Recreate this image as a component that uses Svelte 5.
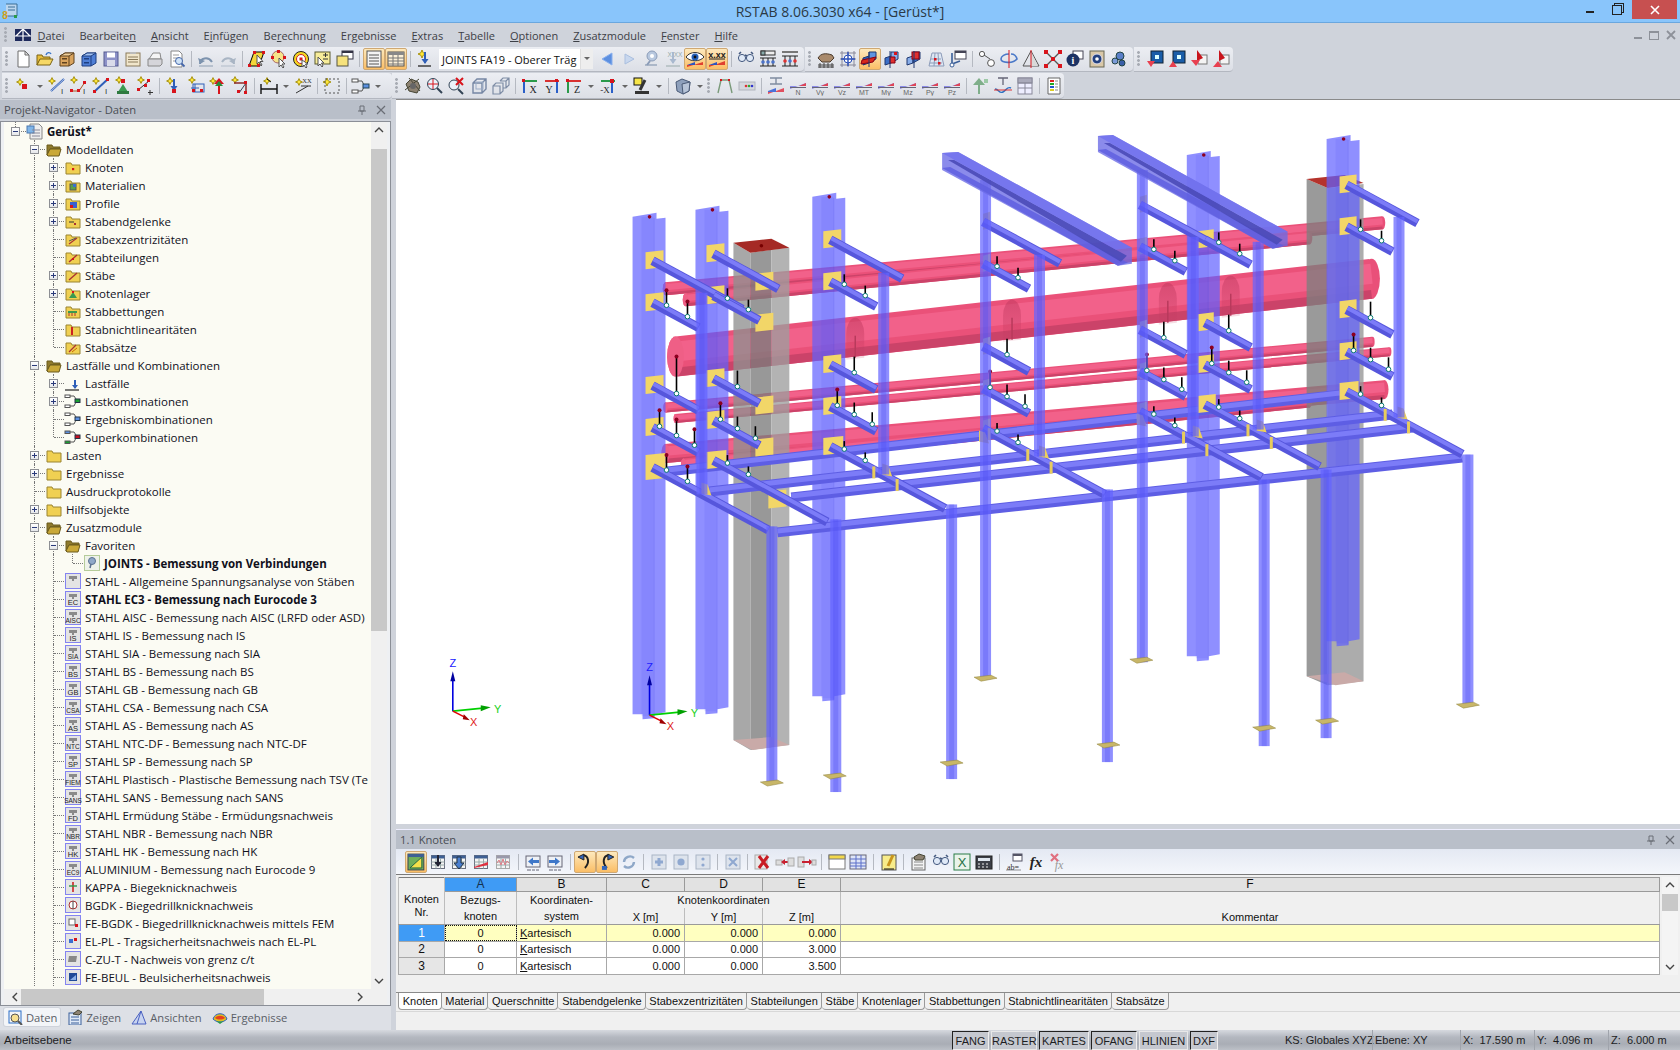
<script>
  // tiny svg string helpers for the toolbar and tree icons
  const R = (x, y, w, h, f, s = 'none') => `<rect x="${x}" y="${y}" width="${w}" height="${h}" fill="${f}" stroke="${s}"/>`
  const L = (d, c = '#555', w = 1) => `<path d="${d}" fill="none" stroke="${c}" stroke-width="${w}"/>`
  const P = (d, f, s = 'none') => `<path d="${d}" fill="${f}" stroke="${s}"/>`
  const C = (x, y, r, f, s = 'none') => `<circle cx="${x}" cy="${y}" r="${r}" fill="${f}" stroke="${s}"/>`
  const T = (x, y, t, z = 8, f = '#333', fam = 'Liberation Sans') => `<text x="${x}" y="${y}" font-size="${z}" fill="${f}" font-family="${fam}" text-anchor="middle">${t}</text>`
  const star = (x, y, r = 3.4) => P(`M${x} ${y - r}l${r * .3} ${r * .7} ${r * .7} ${r * .3} -${r * .7} ${r * .3} -${r * .3} ${r * .7} -${r * .3} -${r * .7} -${r * .7} -${r * .3} ${r * .7} -${r * .3}z`, '#ffe838', '#a89210')
  const sq = (x, y, s = 3.4, c = '#d8141c') => R(x, y, s, s, c)
  const folderOpen = (a = '#e6bd3c', b = '#f6d866') => P('M2 16V6h5l1 2h7v3H5z', a, '#7a6314') + P('M2 16l3-6h13l-3 6z', b, '#7a6314')
  const cab = (a, b, c) => P('M3 7l5-3h9v10l-5 3H3z', a, c) + P('M3 7l5-3h9l-5 3z', b, c) + L('M12 7v10', c) + R(5, 9, 5, 1.5, c) + R(5, 13, 5, 1.5, c)
  const frame = (x = 3, y = 3, w = 14, h = 13, c = '#e3d9b8', e = '#7b6f50') => R(x, y, w, h, c, e)
  const table = (c = '#6a7080', h = '#3d5f94') => R(3.5, 3.5, 13, 13, '#f5f5f5', c) + R(3.5, 3.5, 13, 3, h) + L('M3.5 10h13M3.5 13h13M8 6.5v10M12.5 6.5v10', '#9aa')
  const ldown = (c = '#2f5fb8') => L('M10 3v11', c, 2) + P('M6.5 10l3.5 5 3.5-5z', c)
  const arrowsBar = (dir) => R(3, 4, 14, 11, '#eef1f6', '#667') + (dir < 0 ? P('M5 9.5l5-4v2.5h6v3h-6v2.5z', '#3e77c9') : P('M15 9.5l-5-4v2.5H4v3h6v2.5z', '#3e77c9')) + L('M4 18h4M9 18h3M13 18h3', '#667')
  const planes = (a, b) => P('M3 9l6-2v7l-6 2z', a, '#203870') + P('M9 3h7v7l-7 4z', b, '#203870')
  const beam = (t, lbl) => P('M2 13l16-6v3H2z', '#8a8ae8') + P('M11 10l7-3v3z', '#e04455') + R(2, 11, 16, 1, '#667') + T(10, 18.5, lbl, 7, '#666')

  const ic = {
    new: P('M5 2h7l4 4v12H5z', '#fff', '#6c6c6c') + P('M12 2v4h4z', '#ddd', '#6c6c6c'),
    open: folderOpen() + L('M11 6c1-3 4-3 5-1', '#3874c8', 1.4),
    cab: cab('#d9a45f', '#f0cf9a', '#5e4220'),
    cabB: cab('#4f7fd6', '#a4c3f2', '#1e3f80'),
    save: R(3, 3, 14, 14, '#8d92c8', '#555a90') + R(6, 3.5, 8, 5, '#fff') + R(6, 11, 8, 6, '#d9dbea'),
    notes: frame(3, 4, 14, 13, '#f1e6cb', '#8a7a5a') + L('M5 8h10M5 10.5h10M5 13h10', '#8a7a5a') + R(7, 3, 6, 2, '#bbb'),
    print: P('M4 10l4-6h7l1 6z', '#f5f5f5', '#888') + P('M3 10h14v5l-2 2H3z', '#d5d5da', '#888'),
    prev: P('M4 2h8l3 3v13H4z', '#fff', '#888') + L('M6 6h6M6 9h6M6 12h3', '#999') + C(12, 12, 3.5, '#cfe3f7', '#46a') + L('M14.5 14.5l3 3', '#46a', 1.8),
    undo: L('M4 15c0-6 8-8 12-2', '#7d93ae', 2) + P('M2 9l2 6 5-3z', '#7d93ae') + L('M3 17h14', '#9aa9bb', 1.2),
    redo: L('M16 15c0-6-8-8-12-2', '#a9b5c4', 2) + P('M18 9l-2 6-5-3z', '#a9b5c4') + L('M3 17h14', '#b9c3cf', 1.2),
    para: P('M7 3h10l-5 14H2z', '#f4d63a', '#000') + sq(1, 15, 3) + sq(6, 2, 3) + sq(15, 2, 3) + sq(10, 15, 3) + P('M10 6v9l2-2 2 4 1-1-2-3.5h3z', '#fff', '#555'),
    wheel: C(9, 8, 6, '#f6e48a', '#a66') + sq(2, 7, 3) + sq(14, 7, 3) + sq(8, 1, 3) + P('M10 9v9l2-2 2 3 1-1-2-3h3z', '#fff', '#555'),
    wheelY: C(10, 10, 7.5, '#f6d820', '#222') + C(10, 10, 4.5, '#fff', '#c22') + sq(8.5, 8.5, 3) + P('M11 11v7l2-2 2 3 1-1-1.5-3h2.5z', '#fff', '#555'),
    curAdd: frame(2, 3, 15, 12, '#f7ec9a', '#5a5a30') + L('M10 6h5M12.5 4v4M10 10h5', '#333') + P('M5 8v9l2-2 2 3 1-1-1.5-3H11z', '#fff', '#555'),
    winY: R(7, 2, 11, 8, '#fff', '#334') + R(7, 2, 11, 2, '#334') + R(2, 7, 11, 10, '#f6e27c', '#554'),
    list: frame(3, 2, 14, 16, '#f3f3f3', '#555') + L('M5 6h10M5 9h10M5 12h10M5 15h10', '#555'),
    table: R(2, 3, 16, 14, '#fbf0d8', '#555') + R(2, 3, 16, 3, '#888') + L('M2 9h16M2 12h16M2 15h16M7 6v11M12 6v11', '#777'),
    load: star(7, 5, 4) + L('M3 17h13', '#333', 1.4) + ldown(),
    left: P('M15 4v12L5 10z', '#5c8fe0', '#8ab0ee'),
    right: P('M6 5v10l9-5z', '#c8d7ee', '#aabfdf'),
    pin: L('M4 16h12', '#9aa8bd', 1.5) + C(11, 7, 5, '#b8c8df', '#8b9cb8') + C(11, 7, 2, '#fff') + L('M9 12l-3 4', '#8b9cb8', 2),
    xxa: T(12, 8, 'X.XX', 6.5, '#9aa') + ldown('#a9b9cf') + L('M3 17h14', '#9aa'),
    eye: P('M1 8c4-6 14-6 18 0-4 5-14 5-18 0z', '#fff', '#333') + C(10, 8, 3.5, '#2560b8') + C(10, 8, 1.4, '#111') + P('M2 18l16-5v3H2z', '#e04030') + P('M2 16l8-3v3z', '#2f55c0'),
    xx: `<text x="10" y="9" font-size="9" font-weight="bold" font-family="Liberation Sans" text-anchor="middle" fill="#222">x.xx</text>` + P('M2 18l16-6v4H2z', '#e04030') + P('M2 16l8-3v3z', '#2f55c0') + L('M2 10h16', '#222'),
    glasses: C(6, 9, 3.6, '#dfe9f7', '#44597f') + C(14, 9, 3.6, '#dfe9f7', '#44597f') + L('M9 6l2 1M3 5l2-2M15 3l2 2', '#44597f', 1.6),
    bars: R(3, 2, 14, 4, '#eee', '#333') + R(3, 2, 4, 4, '#8aa', '#333') + L('M2 9h16M2 17h16M5 9v8M10 9v8M15 9v8', '#222') + C(5, 13, 1.8, '#4a72c8') + C(10, 13, 1.8, '#4a72c8') + C(15, 13, 1.8, '#4a72c8'),
    bars2: L('M2 7h16M2 17h16M5 7v10M10 7v10M15 7v10', '#222') + C(5, 12, 1.8, '#d33') + C(10, 12, 1.8, '#4a72c8') + C(15, 12, 1.8, '#d33') + R(2, 2, 16, 2, '#777'),
    hand: P('M2 9c3-5 8-5 14-3l2 3-4 4H6z', '#a98a6c', '#4a3a2c') + L('M2 16h16M2 18h16', '#444', 1) + L('M4 14v5M8 14v5M12 14v5M16 14v5', '#444', 1),
    gridB: L('M2 4h16M2 10h16M2 16h16M4 2v16M10 2v16M16 2v16', '#889') + C(10, 10, 4, '#fff', '#2b4fb8') + L('M10 3v14M3 10h14', '#2b4fb8', 1.4),
    planeA: planes('#2a5fb8', '#5f94e0') + P('M2 11l14-3-3 5-12 2z', '#d8281c', '#801') + L('M9 3v15', '#203870'),
    planeB: planes('#3a6fc8', '#88aeea') + P('M8 8h5v6H8z', '#e03030', '#801') + sq(12, 3, 3) + L('M8 2v17', '#203870'),
    planeC: planes('#88aeea', '#3a6fc8') + R(8, 3, 7, 7, '#e03030', '#801') + L('M10 2v17', '#203870'),
    gridR: P('M3 17l3-13h9l3 13z', '#dfe7f4', '#8b9bb8') + L('M5 10h10M4 14h12M9 4l-1 13M12 4l1 13', '#8b9bb8') + sq(8, 9, 2.5) + sq(12, 13, 2.5),
    curW: L('M4 15V4', '#3a5f99', 1.6) + R(7, 2, 11, 8, '#fff', '#445') + R(7, 2, 11, 2, '#445') + L('M4 15l8-3', '#3a5f99', 1.6) + C(4, 16, 2, '#fff', '#3a5f99'),
    chain: C(5, 5, 2.6, '#fff', '#555') + C(14, 14, 3.4, '#fff', '#555') + L('M7 6l6 4', '#555'),
    rot: L('M2 10c0 4 12 5 16 0-1-4-3-5-6-5', '#4a78c8', 1.6) + L('M2 10c0-3 4-5 8-5', '#4a78c8', 1.6) + L('M10 1v18', '#d8141c'),
    tri: L('M10 2L2 17h8M10 2l8 15h-8', '#555') + P('M10 3l7 14h-7z', '#d9d9d9') + L('M10 1v18', '#d8141c'),
    xr: L('M3 3l14 14M17 3L3 17', '#555', 1.4) + sq(1, 1, 4) + sq(15, 1, 4) + sq(1, 15, 4) + sq(15, 15, 4) + sq(8, 8, 4),
    info: R(8, 2, 10, 8, '#fff', '#445') + C(8, 11, 6.5, '#1c3264') + `<text x="8" y="15" font-size="10" font-weight="bold" fill="#fff" font-family="Liberation Serif" text-anchor="middle">i</text>`,
    gear: frame(3, 2, 14, 16, '#d9c8a8', '#665') + C(10, 10, 5, '#23407e', '#dde') + C(10, 10, 1.8, '#fff'),
    gear2: C(11, 7, 4, '#5a7fc8', '#244') + C(6, 12, 3, '#7a9ad8', '#244') + C(13, 14, 3, '#3a5fa8', '#244'),
    blueD: R(6, 2, 12, 12, '#1a5da8', '#123') + R(10, 6, 4, 4, '#dff') + P('M2 12h8l-4 6z', '#e84050'),
    blueU: R(6, 2, 12, 12, '#1a5da8', '#123') + R(10, 6, 4, 4, '#dff') + P('M2 18h8l-4-6z', '#e84050'),
    redD: R(9, 6, 9, 9, '#f4f4f4', '#777') + P('M8 1l6 8-6 3z', '#c8141c') + P('M2 11h9l-4 6z', '#e84050'),
    redU: R(9, 6, 9, 9, '#f4f4f4', '#777') + P('M8 1l6 8-6 3z', '#c8141c') + P('M2 18h9l-4-6z', '#e84050'),
    s1: star(7, 6) + sq(9, 8, 5),
    s2: star(5, 5) + L('M4 15L17 3', '#2f5fb8', 2) + L('M4 15L17 3', '#fff', .6) + T(15, 18, 'I', 8, '#333'),
    s3: star(5, 4) + L('M2 15h8l6-9', '#a52', 1) + sq(1, 13, 3) + sq(8, 13, 3) + sq(14, 5, 3) + T(15, 18, 'I', 8),
    s4: star(5, 5) + L('M4 15L17 3', '#2f5fb8', 2) + sq(2, 14, 3) + sq(15, 2, 3) + T(15, 18, 'I', 8),
    s5: star(6, 4) + sq(8, 3, 4) + P('M10 8l5 8H5z', '#3a9a50') + R(4, 15, 12, 3, '#2f7a40'),
    s6: star(6, 4) + L('M3 14L14 5', '#333') + sq(2, 12, 3) + sq(12, 3, 3) + sq(9, 8, 3) + L('M15 14v5M13 16.5h5', '#333'),
    s7: star(6, 5) + ldown('#2f5fb8') + sq(8, 13, 4),
    s8: star(6, 4) + R(7, 8, 11, 8, 'none', '#2f5fb8') + L('M5 12h8M9 8v8', '#2f5fb8') + sq(6, 13, 3) + sq(14, 13, 3),
    s9: star(5, 5) + P('M11 2l5 6h-10z', '#d8141c') + P('M11 5l4 5H7z', '#2a8a3a') + L('M11 10v8', '#d8141c', 2),
    s10: star(5, 4) + L('M4 7h12v10', '#8a2a2a', 1.5) + L('M16 7L9 17', '#345') + sq(14, 5, 3) + sq(7, 14, 3) + sq(14, 15, 3),
    dim: L('M2 8v10M18 8v10M2 13h16', '#111', 1.4) + star(8, 5) + L('M8 3l4 3', '#111'),
    dimx: star(6, 6) + T(14, 7, 'XX', 6.5, '#333', 'Liberation Serif') + L('M3 17L15 10', '#333') + L('M8 10h10', '#333'),
    dots: star(5, 6, 4) + `<rect x="3" y="3" width="14" height="14" fill="none" stroke="#555" stroke-dasharray="2 2"/>`,
    combi: R(1, 3, 6, 3, '#fff', '#555') + R(1, 14, 6, 3, '#fff', '#555') + L('M7 5h4l2 4M7 15h4l2-4', '#555') + R(12, 8, 6, 4, '#5c90e0', '#245'),
    cam: P('M3 8l5-5 7 3 2 5-3 6-8-2z', '#8d8272', '#443') + L('M2 14L16 3M6 2l11 13', '#443') + C(10, 10, 3, '#666'),
    zoomC: C(8, 8, 5.5, '#eaf2fb', '#345') + L('M12 12l5 5', '#345', 2) + L('M8 3v10M3 8h10', '#d8141c'),
    zoomX: C(7, 9, 5, '#eaf2fb', '#345') + L('M11 13l5 5', '#345', 2) + L('M9 2l7 7M16 2l-7 7', '#d8141c', 2),
    cube: L('M4 7l4-4h9v10l-4 4H4zM4 7h9v10M13 7l4-4', '#7687a4', 1.4) + R(7, 6, 7, 7, 'none', '#9aabc6'),
    cubes: L('M2 10l3-3h7v8l-3 3H2zM2 10h7v8', '#7e8da6', 1.2) + L('M9 5l3-3h6v7l-3 3h-3M9 5h6v7M15 5l3-3', '#7e8da6', 1.2),
    axX: L('M3 5h14', '#2a9a4a', 2) + L('M4 4v13', '#2a5fc8', 2) + T(13, 17, 'X', 10, '#222', 'Liberation Serif') + sq(2, 3, 3),
    axY: L('M3 5h14', '#d83030', 2) + L('M15 4v13', '#2a5fc8', 2) + T(7, 17, 'Y', 10, '#222', 'Liberation Serif') + sq(13, 3, 3),
    axZ: L('M3 5h14', '#d83030', 2) + L('M4 4v13', '#2a9a4a', 2) + T(13, 17, 'Z', 10, '#222', 'Liberation Serif') + sq(2, 3, 3),
    axm: L('M3 5h14', '#2a9a4a', 2) + L('M14 4v13', '#2a5fc8', 2) + T(7, 17, '-X', 9, '#222', 'Liberation Serif') + sq(12, 3, 4),
    micro: R(2, 2, 8, 7, '#f7e548', '#111') + L('M13 4L8 14', '#333', 3) + R(3, 15, 14, 3, '#333'),
    solid: P('M3 6l6-3 8 3-1 9-6 3-6-3z', '#8ea0bc', '#4a5a76') + P('M9 8l8-2-1 9-6 3z', '#b7c4d8', '#4a5a76'),
    pol1: L('M3 17L6 4h8l3 13', '#7a9a7a', 1.4) + sq(5, 3, 2) + sq(13, 3, 2),
    pill: R(2, 6, 16, 8, '#d4d7dd', '#b0b4bc') + C(9, 10, 1.3, '#d33') + C(12, 10, 1.3, '#3a3') + C(15, 10, 1.3, '#33c'),
    dI: L('M4 2h12M10 2v6M4 8h12', '#7f8ca0', 1.4) + P('M2 18l16-6v4H2z', '#e05060') + P('M2 15l8-3v4H2z', '#4a70d8'),
    greenT: P('M8 2l6 7H2z', '#7fae8a') + R(7, 9, 2, 9, '#7fae8a') + sq(13, 3, 4, '#9cc9a6'),
    curve: L('M10 2v7M5 2h10', '#667', 1.3) + L('M2 13c4 0 4 5 8 3s4-6 8-4', '#2b6fc0', 1.4) + L('M1 14h18', '#d33'),
    stack: R(3, 2, 14, 16, '#eef', '#889') + R(3, 2, 14, 5, '#aab', '#889') + L('M3 12h14M3 7h14M10 7v11', '#889'),
    report: P('M4 2h12v16H4z', '#fff', '#666') + L('M6 5h4', '#d22', 2) + L('M6 8h4', '#2a2', 2) + L('M6 11h4', '#25c', 2) + L('M6 14h4', '#dc2', 2) + L('M11 5h3M11 8h3M11 11h3M11 14h3', '#888'),
    // table toolbar
    tTri: R(2, 2, 16, 16, '#6fae5a', '#345') + P('M4 16L16 5v11z', '#f4e04a', '#264') + R(2, 2, 16, 3, '#3d5f94'),
    tPlus: table() + L('M10 8v6M7 11h6', '#233', 1.6) + ldown('#223'),
    tDown: table() + P('M8 5h4v6h3l-5 6-5-6h3z', '#4a7fd0', '#234'),
    tChart: table() + P('M3 15l14-5v3L3 16z', '#e03040'),
    tWave: table('#aaa', '#99a') + L('M4 11l2-3 2 5 2-6 2 6 2-4 2 2', '#e0808a'),
    arL: arrowsBar(-1),
    arR: arrowsBar(1),
    sw1: L('M8 3c6 1 7 8 2 13', '#222', 2) + P('M3 5l6-3v6z', '#3366bb', '#222'),
    sw2: L('M12 3c-6 1-7 8-2 13', '#222', 2) + P('M17 5l-6-3v6z', '#3366bb', '#222') + R(5, 14, 5, 4, '#3366bb'),
    circ: L('M5 10a6 6 0 0 1 10-4M15 10a6 6 0 0 1-10 4', '#8fa8c8', 2.4),
    pPlus: R(3, 3, 14, 14, '#dde3ec', '#aab5c5') + L('M10 6v8M6 10h8', '#8fa8d0', 3),
    pStar: R(3, 3, 14, 14, '#dde3ec', '#aab5c5') + C(10, 10, 3.6, '#8fa8d0'),
    pCol: R(3, 3, 14, 14, '#dde3ec', '#aab5c5') + C(10, 7, 1.6, '#8fa8d0') + C(10, 13, 1.6, '#8fa8d0'),
    pX: R(3, 3, 14, 14, '#dde3ec', '#aab5c5') + L('M6 6l8 8M14 6l-8 8', '#8fa8d0', 2),
    xRow: R(2, 3, 12, 14, '#e8e8e8', '#aaa') + L('M6 4l9 12M15 4L6 16', '#c81c24', 3),
    arRow: R(1, 8, 6, 5, '#ddd', '#aaa') + L('M17 10H8', '#c82030', 2) + P('M10 7l-4 3 4 3z', '#c82030') + R(13, 6, 6, 8, '#ddd', '#aaa'),
    arRow2: R(1, 5, 6, 10, '#ddd', '#aaa') + L('M5 10h9', '#c82030', 2) + P('M12 7l4 3-4 3z', '#c82030') + R(15, 8, 4, 5, '#ddd', '#aaa'),
    colY: R(2, 3, 16, 14, '#fff', '#777') + R(2, 3, 16, 4, '#f2d84a', '#777'),
    colB: R(2, 3, 16, 14, '#dfe6f7', '#667') + L('M2 7h16M2 11h16M2 14h16M8 3v14M13 3v14', '#5a6fc8'),
    penY: R(3, 3, 14, 15, '#f7ec8a', '#555') + L('M14 3L9 14', '#c8941c', 3) + L('M5 17h10', '#111'),
    noteH: frame(3, 6, 13, 12, '#f3f3f3', '#666') + L('M5 10h9M5 13h9M5 16h9', '#888') + P('M5 5l5-3 6 2-2 4H6z', '#8d8272', '#443'),
    excel: R(2, 2, 16, 16, '#e9f3ea', '#2a7d46') + T(10, 15, 'X', 13, '#1d7044', 'Liberation Sans'),
    calc: R(2, 4, 16, 13, '#3c3f47', '#222') + R(4, 6, 12, 3, '#dfe6ee') + L('M4 12h2M8 12h2M12 12h2M4 15h2M8 15h2M12 15h2', '#eee'),
    ab: R(9, 2, 9, 7, '#fff', '#556') + R(9, 2, 9, 2, '#556') + `<text x="9" y="18" font-size="8" font-family="Liberation Serif" fill="#333" text-anchor="middle">ab=</text>` + L('M2 18h15', '#333', .5),
    fx: `<text x="10" y="15" font-size="15" font-style="italic" font-weight="bold" font-family="Liberation Serif" fill="#222" text-anchor="middle">fx</text>`,
    fxR: `<text x="11" y="17" font-size="12" font-style="italic" font-family="Liberation Serif" fill="#999" text-anchor="middle">fx</text>` + L('M3 2l7 7M10 2L3 9', '#e07080', 2.2),
  }
  for (const [k, l] of [['N', 'N'], ['Vy', 'Vy'], ['Vz', 'Vz'], ['Mt', 'MT'], ['My', 'My'], ['Mz', 'Mz'], ['Py', 'Py'], ['Pz', 'Pz']]) ic['b' + k] = beam(k, l)

  // g = gripper, s = separator, d = small dropdown arrow
  const bar = (str) => str.split(' ')
  const tb1a = bar('g new open cab cabB save notes print prev s undo redo s para wheel wheelY curAdd winY s list* table* s load combo left right pin xxa eye* xx* s glasses bars bars2')
  const tb1b = bar('g hand gridB planeA* planeB planeC gridR curW s chain rot tri xr info gear gear2')
  const tb1c = bar('g blueD blueU redD redU')
  const tb2a = bar('g s1 d s2 s3 s4 s5 s6 s s7 s8 s9 s10 s dim d dimx s dots s combi d')
  const tb2b = bar('g cam zoomC zoomX cube cubes s axX axY axZ d axm d micro d s solid d g pol1 pill s dI bN bVy bVz bMt bMy bMz bPy bPz s greenT curve stack s report')
  const tbTable = bar('tTri* tPlus tDown tChart tWave s arL arR s sw1* sw2* circ s pPlus pStar pCol s pX s xRow arRow arRow2 s colY colB s penY s noteH glasses excel calc s ab fx fxR')

  const menus = [['', 'D', 'atei'], ['Bearbeite', 'n', ''], ['', 'A', 'nsicht'], ['E', 'i', 'nfügen'], ['Be', 'r', 'echnung'], ['Er', 'g', 'ebnisse'], ['', 'E', 'xtras'], ['', 'T', 'abelle'], ['', 'O', 'ptionen'], ['', 'Z', 'usatzmodule'], ['', 'F', 'enster'], ['', 'H', 'ilfe']]

  // tree icons
  const folder = (m = '') => P('M1 4h5l1 2h8v9H1z', '#f0d052', '#9a8430') + m
  const folderO = P('M1 14V4h5l1 2h7v2H4z', '#8f7a2c', '#6a5a1c') + P('M1 14l3-6h11l-2 7H2z', '#c9a838', '#6a5a1c')
  const combi3 = (a, b, c) => R(0, 2, 5, 2.5, a, '#555') + R(0, 12, 5, 2.5, b, '#555') + L('M5 3h4l2 3M5 13h4l2-4', '#555') + R(10, 6, 5, 3.5, c, '#234')
  const mod = (t, extra = '') => R(.5, .5, 15, 15, '#e4e4e4', '#8484f0') + extra + (t ? T(8, 14, t, t.length > 2 ? 6.5 : 7.5, '#222') : '')
  const doc = P('M3 1h9l3 3v12H3z', '#eee', '#888') + R(0, 3, 7, 7, '#7fb5e8', '#4a78b0') + L('M5 7h8M5 10h8M5 13h8', '#889')

  const tree = [
    { t: 'Gerüst*', l: 0, b: 1, e: '-', i: doc },
    { t: 'Modelldaten', l: 1, e: '-', i: folderO },
    { t: 'Knoten', l: 2, e: '+', i: folder(sq(7, 9, 2.2)) },
    { t: 'Materialien', l: 2, e: '+', i: folder(R(5, 7, 6, 6, '#5a9f4a', '#555') + sq(8, 7, 3, '#3a6fd0')) },
    { t: 'Profile', l: 2, e: '+', i: folder(R(5, 7, 7, 6, '#3a5fd0') + sq(5, 10, 3)) },
    { t: 'Stabendgelenke', l: 2, e: '+', i: folder(L('M4 9h5', '#333', 1) + sq(9, 10, 2, '#a33')) },
    { t: 'Stabexzentrizitäten', l: 2, i: folder(L('M4 13l8-6', '#a33', 1.2) + L('M4 10l7-3', '#555')) },
    { t: 'Stabteilungen', l: 2, i: folder(L('M4 13l8-7', '#a33', 1.4) + sq(7, 9, 2)) },
    { t: 'Stäbe', l: 2, e: '+', i: folder(L('M4 13l8-7', '#a33', 1.4)) },
    { t: 'Knotenlager', l: 2, e: '+', i: folder(P('M8 7l4 6H4z', '#3a9a50') + sq(7, 6, 2)) },
    { t: 'Stabbettungen', l: 2, i: folder(R(3, 8, 9, 2, '#3a9a50') + L('M4 10v3M7 10v3M10 10v3', '#a33')) },
    { t: 'Stabnichtlinearitäten', l: 2, i: folder(L('M7 6v8', '#c22', 2)) },
    { t: 'Stabsätze', l: 2, last: 1, i: folder(L('M4 13l7-7', '#a33', 1.2) + L('M7 13l5-4', '#c60', 1)) },
    { t: 'Lastfälle und Kombinationen', l: 1, e: '-', i: folderO },
    { t: 'Lastfälle', l: 2, e: '+', i: L('M0 15h14', '#222', 1.2) + L('M10 5v8', '#2f5fb8', 2) + P('M7 10l3 4 3-4z', '#2f5fb8') },
    { t: 'Lastkombinationen', l: 2, e: '+', i: combi3('#fff', '#fff', '#18a030') },
    { t: 'Ergebniskombinationen', l: 2, i: combi3('#fff', '#fff', '#5c90e0') },
    { t: 'Superkombinationen', l: 2, last: 1, i: combi3('#5c90e0', '#18a030', '#c81020') },
    { t: 'Lasten', l: 1, e: '+', i: folder() },
    { t: 'Ergebnisse', l: 1, e: '+', i: folder() },
    { t: 'Ausdruckprotokolle', l: 1, i: folder() },
    { t: 'Hilfsobjekte', l: 1, e: '+', i: folder() },
    { t: 'Zusatzmodule', l: 1, e: '-', i: folderO },
    { t: 'Favoriten', l: 2, e: '-', i: folderO },
    { t: 'JOINTS - Bemessung von Verbindungen', l: 3, b: 1, last: 1, i: R(0.5, 0.5, 15, 15, '#eef2ea', '#b5cc9a') + C(8, 6, 3.5, '#8fa8c8', '#5a7090') + L('M7 9l-1 4', '#5a7090', 1.6) },
    ...[
      ['STAHL - Allgemeine Spannungsanalyse von Stäben', ''], ['STAHL EC3 - Bemessung nach Eurocode 3', 'EC', 1],
      ['STAHL AISC - Bemessung nach AISC (LRFD oder ASD)', 'AISC'], ['STAHL IS - Bemessung nach IS', 'IS'],
      ['STAHL SIA - Bemessung nach SIA', 'SIA'], ['STAHL BS - Bemessung nach BS', 'BS'], ['STAHL GB - Bemessung nach GB', 'GB'],
      ['STAHL CSA - Bemessung nach CSA', 'CSA'], ['STAHL AS - Bemessung nach AS', 'AS'], ['STAHL NTC-DF - Bemessung nach NTC-DF', 'NTC'],
      ['STAHL SP - Bemessung nach SP', 'SP'], ['STAHL Plastisch - Plastische Bemessung nach TSV (Te', 'FIEM'],
      ['STAHL SANS - Bemessung nach SANS', 'SANS'], ['STAHL Ermüdung Stäbe - Ermüdungsnachweis', 'FD'], ['STAHL NBR - Bemessung nach NBR', 'NBR'],
      ['STAHL HK - Bemessung nach HK', 'HK'], ['ALUMINIUM - Bemessung nach Eurocode 9', 'EC9'],
    ].map(([t, m, b]) => ({ t, l: 2, b, i: mod(m, P('M4 3h8v3h-3v2H7V6H4z', '#8a8a8a')) })),
    { t: 'KAPPA - Biegeknicknachweis', l: 2, i: mod('', L('M8 3v10', '#c22', 1.6) + L('M4 7h8', '#2a9a4a', 1.4)) },
    { t: 'BGDK - Biegedrillknicknachweis', l: 2, i: mod('', C(8, 8, 4, '#fff', '#a33') + L('M8 4v8', '#444')) },
    { t: 'FE-BGDK - Biegedrillknicknachweis mittels FEM', l: 2, i: mod('', R(4, 4, 6, 6, '#fff', '#666') + sq(10, 9, 3)) },
    { t: 'EL-PL - Tragsicherheitsnachweis nach EL-PL', l: 2, i: mod('', R(4, 6, 4, 4, '#3a6fd0') + sq(9, 5, 3)) },
    { t: 'C-ZU-T - Nachweis von grenz c/t', l: 2, i: mod('', P('M4 5h8l-1 6H3z', '#888')) },
    { t: 'FE-BEUL - Beulsicherheitsnachweis', l: 2, i: mod('', P('M4 4h8v8H4z', '#1f4a98') + P('M5 11l6-5v5z', '#8ab0e8')) },
  ]

  const navTabs = [
    { t: 'Daten', a: 1, i: R(2, 2, 12, 12, '#f5f5f5', '#2a6fc8') + C(8, 9, 4, '#f8e090', '#555') + L('M11 12l4 4', '#555', 2) },
    { t: 'Zeigen', i: R(2, 4, 12, 12, '#dfe9f7', '#3a5f99') + L('M4 8h8M4 11h8M4 14h8', '#3a5f99') + P('M6 5l5-4 4 2-3 3z', '#8d8272', '#443') },
    { t: 'Ansichten', i: P('M1 15h14l-5-13z', '#c8d4f0', '#4a60c0') + L('M10 2L6 15', '#4a60c0') },
    { t: 'Ergebnisse', i: P('M1 10C3 3 13 3 15 10c-4 4-10 4-14 0z', '#e0c020', '#2a5fc8') + P('M3 9c2-3 8-3 10 0-3 2-7 2-10 0z', '#e84020') + P('M4 12c3 1 6 1 8 0l-4 3z', '#2a9a4a') },
  ]

  const colHeads = ['A', 'B', 'C', 'D', 'E', 'F']
  const rows = [['1', '0', '0.000', '0.000', '0.000'], ['2', '0', '0.000', '0.000', '3.000'], ['3', '0', '0.000', '0.000', '3.500']]
  const tabs = ['Knoten', 'Material', 'Querschnitte', 'Stabendgelenke', 'Stabexzentrizitäten', 'Stabteilungen', 'Stäbe', 'Knotenlager', 'Stabbettungen', 'Stabnichtlinearitäten', 'Stabsätze']
  const toggles = [['FANG', 1], ['RASTER', 0], ['KARTES', 1], ['OFANG', 1], ['HLINIEN', 0], ['DXF', 1]]

  // ---- 3D model, in page coordinates (the svg viewBox starts at 396,100) ----
  const SL = 0.54
  const pipes = [
    [665, 289, 1383, 223, 6.5], [685, 300, 1310, 238, 6.5],
    [665, 408, 1373, 342, 5], [675, 419, 1390, 352, 4.5],
    [665, 454, 1385, 390, 9.5], [683, 465, 1310, 402, 6],
    [675, 357, 1372, 279, 20],
  ]
  const saddles = [[855, 322], [1012, 304], [1168, 287], [1231, 280]]
  const bigCols = [[632, 215, 715], [695, 208, 710], [812, 195, 697], [1187, 153, 657], [1327, 137, 642]]
  const thinCols = [
    [696, 293, 495], [878, 273, 475], [1034, 255, 457], [1188, 237, 437], [1253, 242, 430], [1394, 217, 418],
    [766, 527, 785], [830, 520, 793], [946, 505, 780], [980, 180, 680], [1102, 490, 763], [1137, 170, 663], [1259, 480, 747], [1321, 470, 739], [1463, 455, 707],
  ]
  const feet = [[771, 784], [834, 777], [951, 764], [985, 679], [1108, 746], [1141, 661], [1264, 729], [1327, 722], [1468, 706]]
  const footJoints = [[701, 483], [882, 464], [1039, 446], [1193, 426], [1257, 420], [1398, 407], [979, 431], [1137, 414]]
  const floorLong = [[667, 472, 1340, 395], [709, 492, 1393, 415], [791, 498, 1413, 428], [777, 533, 1463, 458]]
  const racks = [
    { bx: 652, by: 261, top: 90, end: 116, p: [18, 19] },
    { bx: 713, by: 254, top: 65, end: 114, p: [18, 19] },
    { bx: 830, by: 240, top: 72, end: 115, p: [18, 19] },
    { bx: 983, by: 222, top: 77, end: 122, p: [7, 18] },
    { bx: 1140, by: 205, top: 80, end: 122, p: [7, 18] },
    { bx: 1205, by: 198, top: 0, end: 115, p: [16, 19] },
    { bx: 1347, by: 185, top: 71, end: 116, p: [17, 19] },
  ]
  const rowOff = [0, 42, 125, 167, 207]
  const nodeDx = [[], [14, 35], [24], [7, 24, 42], [14, 35]]
  const hangH = [0, 15, 37, 16, 15]
  const hangShort = [0, 10, 16, 12, 8]
  const outerPlates = [[755, 272], [755, 313], [755, 396], [755, 438], [768, 490]]
  const beams = [], plates = [], hangers = [], nodes = [], ticks = []
  racks.forEach((r, idx) => {
    rowOff.forEach((o, i) => {
      const y = r.by + o
      const len = i === 0 ? r.top : i === 4 ? r.end : 46
      if (len) beams.push([r.bx, y, r.bx + len, y + len * SL])
      if (i > 0 || r.top) {
        const big = r.p[0] > 10
        const w = i === 4 && big ? r.p[0] + 2 : r.p[0]
        const h = i === 4 && r.bx === 652 ? 27 : r.p[1]
        const px = r.bx - (big ? 7 : 0), py = y - h / 2 - 1
        plates.push(`${px},${py + 2} ${px + w},${py} ${px + w},${py + h - 2} ${px},${py + h}`)
      }
      for (const dx of nodeDx[i]) {
        const ny = y + dx * SL - 5
        // only the first rack stands in front of the pipes; elsewhere the hanger disappears into them
        const full = idx === 0 || (i === 3 && dx === 7)
        nodes.push([r.bx + dx, ny])
        hangers.push([r.bx + dx, ny, ny - (full ? hangH[i] : hangShort[i]), full])
      }
    })
    // yellow gusset where this rack's floor beam crosses the long beams
    if (idx >= 2) {
      const y0 = r.by + 207
      for (const [x1, y1, x2, y2] of floorLong) {
        const m = (y2 - y1) / (x2 - x1)
        const x = (y1 - y0 + SL * r.bx - m * x1) / (SL - m)
        if (x > r.bx + 10 && x < r.bx + r.end + 2) ticks.push([x - 6, y0 + (x - r.bx) * SL])
      }
    }
  })
  for (const [x, y] of outerPlates) plates.push(`${x},${y + 2} ${x + 18},${y} ${x + 18},${y + 17} ${x},${y + 19}`)

  const ibeams = [
    { body: '942,153 958,152 1132,248 1132,264 1118,266 942,170', tf: '942,153 958,152 1132,248 1116,250', web: '948,160 954,160 1127,256 1121,262', bf: '942,168 950,167 1128,263 1118,266' },
    { body: '1098,136 1113,135 1288,232 1288,246 1273,249 1098,152', tf: '1098,136 1113,135 1288,232 1273,234', web: '1104,143 1110,143 1283,240 1277,245', bf: '1098,150 1106,149 1284,246 1273,249' },
  ]
</script>

{#snippet icon(name)}
  <svg class="ico" viewBox="0 0 20 20" width="20" height="20">{@html ic[name]}</svg>
{/snippet}

{#snippet toolbar(items)}
  {#each items as raw}
    {@const active = raw.endsWith('*')}
    {@const name = raw.replace('*', '')}
    {#if name === 'g'}
      <span class="grip"></span>
    {:else if name === 's'}
      <span class="sep"></span>
    {:else if name === 'd'}
      <span class="drop"></span>
    {:else if name === 'combo'}
      <div class="combo"><span>JOINTS FA19 - Oberer Träg</span><i class="combo-btn"></i></div>
    {:else}
      <span class="tool" class:on={active}>{@render icon(name)}</span>
    {/if}
  {/each}
{/snippet}

<div class="app">
  <header class="title">
    <svg class="appicon" viewBox="0 0 18 18" width="18" height="18">
      <path d="M5 2h11v12H5" fill="#bcd6ee" stroke="#3a6f96"/><path d="M7 5h7M7 8h7" stroke="#3a6f96" fill="none"/><rect x="13" y="13" width="3" height="3" fill="#2a9a4a"/>
      <text x="4" y="17" font-size="10" font-weight="bold" fill="#d4a017" font-family="Liberation Sans" text-anchor="middle">8</text>
    </svg>
    <span class="title-text">RSTAB 8.06.3030 x64 - [Gerüst*]</span>
    <div class="winbtns">
      <span class="wb min"></span>
      <span class="wb max"></span>
      <span class="wb close"><svg viewBox="0 0 10 10" width="10" height="10"><path d="M1 1l8 8M9 1l-8 8" stroke="#fff" stroke-width="1.6"/></svg></span>
    </div>
  </header>

  <nav class="menubar">
    <span class="grip"></span>
    <svg class="logo" viewBox="0 0 16 12" width="16" height="12">
      <rect width="16" height="12" fill="#1e2a5c"/><path d="M0 7h16M8 0L1 7M8 0l7 7M8 0v12" stroke="#fff" stroke-width="1.2" fill="none"/>
    </svg>
    {#each menus as m}
      <span class="menu">{m[0]}<u>{m[1]}</u>{m[2]}</span>
    {/each}
    <div class="mdi">
      <span class="mdi-min"></span><span class="mdi-max"></span>
      <svg viewBox="0 0 10 10" width="10" height="10"><path d="M1 1l8 8M9 1l-8 8" stroke="#8d9199" stroke-width="1.8"/></svg>
    </div>
  </nav>

  <div class="tbrow first">
    <div class="tbar a">{@render toolbar(tb1a)}</div>
    <div class="tbar b">{@render toolbar(tb1b)}</div>
    <div class="tbar c">{@render toolbar(tb1c)}</div>
  </div>
  <div class="tbrow second">
    <div class="tbar d">{@render toolbar(tb2a)}</div>
    <div class="tbar e">{@render toolbar(tb2b)}</div>
  </div>

  <main class="main">
    <aside class="nav">
      <div class="pane-head">
        <span>Projekt-Navigator - Daten</span>
        <span class="pane-btns">
          <svg viewBox="0 0 10 10" width="10" height="10"><path d="M3 1h4v5H3zM1 6h8M5 6v4" stroke="#6a6e76" fill="none"/></svg>
          <svg viewBox="0 0 10 10" width="10" height="10"><path d="M1 1l8 8M9 1l-8 8" stroke="#6a6e76" stroke-width="1.2"/></svg>
        </span>
      </div>
      <div class="nav-frame">
        <div class="tree-wrap">
          <div class="tree">
            {#each tree as n}
              <div class="row">
                {#each Array(n.l) as _, c}
                  <span class="cell" class:pipe={c === 1 || (c === 2 && n.l === 3)}></span>
                {/each}
                <span class="cell conn" class:pipe={n.l > 0} class:root={n.l === 0} class:last={n.last}>
                  {#if n.e}<b class="exp">{#if n.e === '+'}<i class="v"></i>{/if}<i class="h"></i></b>{/if}
                </span>
                <svg class="tico" viewBox="0 0 16 16" width="16" height="16">{@html n.i}</svg>
                <span class="label" class:bold={n.b}>{n.t}</span>
              </div>
            {/each}
          </div>
          <div class="vscroll">
            <svg viewBox="0 0 10 6" width="10" height="6"><path d="M1 5l4-4 4 4" stroke="#444" stroke-width="1.4" fill="none"/></svg>
            <div class="thumb-track"><div class="vthumb"></div></div>
            <svg viewBox="0 0 10 6" width="10" height="6"><path d="M1 1l4 4 4-4" stroke="#444" stroke-width="1.4" fill="none"/></svg>
          </div>
        </div>
        <div class="hscroll">
          <svg viewBox="0 0 6 10" width="6" height="10"><path d="M5 1L1 5l4 4" stroke="#444" stroke-width="1.4" fill="none"/></svg>
          <div class="hthumb"></div>
          <svg viewBox="0 0 6 10" width="6" height="10"><path d="M1 1l4 4-4 4" stroke="#444" stroke-width="1.4" fill="none"/></svg>
        </div>
      </div>
      <div class="nav-tabs">
        {#each navTabs as t}
          <span class="nav-tab" class:active={t.a}>
            <svg viewBox="0 0 16 16" width="16" height="16">{@html t.i}</svg>{t.t}
          </span>
        {/each}
      </div>
    </aside>

    <section class="right">
      <svg class="view" viewBox="396 100 1284 725" width="1284" height="725">
        <defs>
          <linearGradient id="saddle" x1="0" y1="0" x2="0" y2="1"><stop offset="0" stop-color="#c23a60" stop-opacity=".55"/><stop offset="1" stop-color="#c23a60" stop-opacity=".15"/></linearGradient>
        </defs>
        <!-- pipes -->
        {#each pipes as [x1, y1, x2, y2, r]}
          <ellipse cx={x1} cy={y1} rx={r * .42} ry={r} fill="#ef5f86"/>
          <ellipse cx={x2} cy={y2} rx={r * .42} ry={r} fill="#e95079"/>
          <line {x1} {y1} {x2} {y2} stroke="#ea5179" stroke-width={r * 2}/>
          <line {x1} y1={y1 - r * .25} {x2} y2={y2 - r * .25} stroke="#f2618a" stroke-width={r}/>
          <line {x1} y1={y1 + r * .78} {x2} y2={y2 + r * .78} stroke="#cb4369" stroke-width={r * .44}/>
          <ellipse cx={x1} cy={y1} rx={r * .42} ry={r} fill="#ef5f86"/>
        {/each}
        {#each saddles as [x, y]}
          <path d="M{x - 9} {y + 38} V{y + 12} a9 16 0 0 1 18 0 V{y + 36} z" fill="url(#saddle)"/>
          <line x1={x} y1={y + 14} x2={x} y2={y + 36} stroke="#b83a5c" stroke-width="1.5"/>
        {/each}

        <!-- concrete blocks -->
        <g opacity=".78">
          <polygon points="733,243 750,253 750,751 733,741" fill="#909090"/>
          <polygon points="750,253 771,250 771,748 750,751" fill="#7c7c7c"/>
          <polygon points="771,250 789,248 789,746 771,748" fill="#9e9e9e"/>
          <polygon points="1307,179 1328,188 1328,686 1307,677" fill="#7e7e7e"/>
          <polygon points="1328,188 1364,184 1364,682 1328,686" fill="#969696"/>
        </g>
        <polygon points="733,243 771,239 789,248 750,253" fill="#a52a25"/>
        <polygon points="733,741 752,751 789,746 771,738" fill="#c9aaa8"/>
        <polygon points="1307,179 1345,175 1364,183 1328,188" fill="#b5332c"/>
        <polygon points="1307,677 1336,686 1364,682 1345,673" fill="#c9aaa8"/>
        <circle cx="761" cy="246" r="1.8" fill="#700"/>

        <!-- big columns -->
        {#each bigCols as [x, t, b]}
          <polygon points="{x},{t + 2} {x + 24},{t - 2} {x + 24},{t + 4} {x + 33},{t + 3} {x + 33},{b - 2} {x + 22},{b} {x + 22},{b + 4} {x + 10},{b + 5} {x + 10},{b} {x},{b}" fill="#6060ff" opacity=".7"/>
          <rect x={x + 9} y={t + 2} width="12" height={b - t} fill="#5050f0" opacity=".13"/>
          <rect x={x + 21} y={t + 3} width="1" height={b - t} fill="#4040e0" opacity=".2"/>
          <circle cx={x + 17} cy={t + 2} r="1.8" fill="#8c0020"/>
        {/each}

        <!-- floor grid, long direction -->
        {#each floorLong as [x1, y1, x2, y2]}
          <line {x1} {y1} {x2} {y2} stroke="#5e5ee4" stroke-width="10"/>
          <line {x1} y1={y1 - 1.5} {x2} y2={y2 - 1.5} stroke="#7c7cf8" stroke-width="5"/>
        {/each}

        <!-- plates, cantilevers, hangers -->
        {#each plates as pts}
          <polygon points={pts} fill="#f2d668"/>
        {/each}
        {#each hangers as [x, y1, y2, full]}
          <line x1={x} {y1} x2={x} {y2} stroke="#000" stroke-width="1.6"/>
          {#if full}<circle cx={x} cy={y2} r="2" fill="#8c0020"/>{/if}
        {/each}
        {#each beams as [x1, y1, x2, y2]}
          <line {x1} {y1} {x2} {y2} stroke="#5656dc" stroke-width="9"/>
          <line x1={x1 + 1} y1={y1 - 1.6} {x2} y2={y2 - 1.6} stroke="#7c7cf8" stroke-width="4"/>
        {/each}
        {#each ticks as [x, y]}
          <rect {x} y={y - 6} width="3" height="12" fill="#e8cc5c"/>
        {/each}

        <!-- slim columns -->
        {#each footJoints as [x, y]}
          <polygon points="{x},{y} {x + 6},{y + 2} {x + 10},{y + 13} {x},{y + 11}" fill="#eccf5c"/>
        {/each}
        {#each thinCols as [x, t, b]}
          <rect {x} y={t} width="11" height={b - t} fill="#6464ff" opacity=".72"/>
          <rect x={x + 3} y={t} width="5" height={b - t} fill="#4c4cf0" opacity=".3"/>
        {/each}
        {#each feet as [x, y]}
          <polygon points="{x - 11},{y - 1} {x + 6},{y - 3} {x + 12},{y} {x - 4},{y + 3}" fill="#c8b668" stroke="#8d8138" stroke-width=".5"/>
        {/each}
        {#each nodes as [x, y]}
          <circle cx={x} cy={y} r="2.3" fill="#fff" stroke="#0c7a70" stroke-width="1"/>
        {/each}

        <!-- top I beams -->
        {#each ibeams as b}
          <polygon points={b.body} fill="#6a6ae6" opacity=".78"/>
          <polygon points={b.bf} fill="#5f5fe0" opacity=".85"/>
          <polygon points={b.web} fill="#4a4ab8" opacity=".9"/>
          <polygon points={b.tf} fill="#7272ee" opacity=".85"/>
        {/each}

        <!-- coordinate axes -->
        {#each [[452, 712, 0], [649, 716, 1]] as [x, y]}
          <line x1={x} y1={y} x2={x} y2={y - 32} stroke="#0000e0" stroke-width="1.6"/>
          <polygon points="{x - 2.5},{y - 30} {x + 2.5},{y - 30} {x},{y - 40}" fill="#0000a0"/>
          <line x1={x} y1={y} x2={x + 30} y2={y - 3} stroke="#00d000" stroke-width="1.6"/>
          <polygon points="{x + 28},{y - 6} {x + 38},{y - 4} {x + 28},{y}" fill="#00a000"/>
          <line x1={x} y1={y} x2={x + 12} y2={y + 6} stroke="#e00000" stroke-width="1.6"/>
          <polygon points="{x + 11},{y + 3} {x + 17},{y + 9} {x + 10},{y + 8}" fill="#a00000"/>
          <text x={x} y={y - 44} class="ax" fill="#2020ff">Z</text>
          <text x={x + 45} y={y + 2} class="ax" fill="#20d020">Y</text>
          <text x={x + 21} y={y + 15} class="ax" fill="#e02020">X</text>
        {/each}
      </svg>

      <div class="sheet">
        <div class="pane-head sheet-head">
          <span>1.1 Knoten</span>
          <span class="pane-btns">
            <svg viewBox="0 0 10 10" width="10" height="10"><path d="M3 1h4v5H3zM1 6h8M5 6v4" stroke="#6a6e76" fill="none"/></svg>
            <svg viewBox="0 0 10 10" width="10" height="10"><path d="M1 1l8 8M9 1l-8 8" stroke="#6a6e76" stroke-width="1.2"/></svg>
          </span>
        </div>
        <div class="sheet-tools">{@render toolbar(tbTable)}</div>
        <div class="grid-area">
          <div class="grid-inner">
            <table>
              <colgroup><col style="width:46px"/><col style="width:72px"/><col style="width:90px"/><col style="width:78px"/><col style="width:78px"/><col style="width:78px"/><col/></colgroup>
              <thead>
                <tr class="letters">
                  <th rowspan="3" class="nr">Knoten<br/>Nr.</th>
                  {#each colHeads as h, i}<th class="lt" class:sel={i === 0}>{h}</th>{/each}
                </tr>
                <tr class="h1">
                  <th rowspan="2">Bezugs-<br/>knoten</th>
                  <th rowspan="2">Koordinaten-<br/>system</th>
                  <th colspan="3" class="span">Knotenkoordinaten</th>
                  <th class="noB"></th>
                </tr>
                <tr class="h2">
                  <th class="m">X [m]</th><th class="m">Y [m]</th><th class="m">Z [m]</th>
                  <th>Kommentar</th>
                </tr>
              </thead>
              <tbody>
                {#each rows as r, i}
                  <tr class:cur={i === 0}>
                    <th class="rh" class:sel={i === 0}>{r[0]}</th>
                    <td class="ctr" class:focus={i === 0}>{r[1]}</td>
                    <td class="sys"><u>K</u>artesisch</td>
                    <td class="num">{r[2]}</td><td class="num">{r[3]}</td><td class="num">{r[4]}</td>
                    <td></td>
                  </tr>
                {/each}
              </tbody>
            </table>
            <div class="grid-scroll">
              <svg viewBox="0 0 10 6" width="10" height="6"><path d="M1 5l4-4 4 4" stroke="#444" stroke-width="1.4" fill="none"/></svg>
              <div class="gthumb"></div>
              <svg viewBox="0 0 10 6" width="10" height="6"><path d="M1 1l4 4 4-4" stroke="#444" stroke-width="1.4" fill="none"/></svg>
            </div>
          </div>
        </div>
        <div class="tabs">
          {#each tabs as t, i}
            <span class="tab" class:active={i === 0}>{t}</span>
          {/each}
        </div>
      </div>
    </section>
  </main>

  <footer class="status">
    <span class="st-left">Arbeitsebene</span>
    <div class="toggles">
      {#each toggles as [t, down]}
        <span class="tog" class:down={down}>{t}</span>
      {/each}
    </div>
    <span class="st ks">KS: Globales XYZ</span>
    <span class="st eb">Ebene: XY</span>
    <span class="st cx">X:&nbsp; 17.590 m</span>
    <span class="st cy">Y:&nbsp; 4.096 m</span>
    <span class="st cz">Z:&nbsp; 6.000 m</span>
  </footer>
</div>

<style>
  :global(body) { margin: 0; background: #cfd3db; }

  .app {
    width: 1680px;
    height: 1050px;
    display: flex;
    flex-direction: column;
    overflow: hidden;
    background: #cfd3db;
    font-family: "Open Sans", "Noto Sans", sans-serif;
    font-size: 11.5px;
    color: #111;
  }

  /* title bar */
  .title {
    height: 22px;
    flex: none;
    border-bottom: 1px solid #6aa7de;
    background: #89c5fb;
    display: grid;
    grid-template-columns: 1fr auto 1fr;
    align-items: center;
  }
  .appicon { margin-left: 1px; }
  .title-text { font-size: 14px; color: #2b3a46; }
  .winbtns { justify-self: end; display: flex; align-items: flex-start; height: 100%; margin-right: 3px; }
  .wb { display: block; }
  .min { width: 8px; height: 2px; background: #222; margin: 11px 18px 0 0; }
  .max { width: 8px; height: 8px; border: 1px solid #222; margin: 5px 10px 0 0; box-shadow: 2px -2px 0 -1px #89c5fb, 2px -2px 0 0 #222; }
  .close { width: 45px; height: 19px; background: #c75050; display: flex; align-items: center; justify-content: center; }

  /* menu */
  .menubar { height: 24px; flex: none; display: flex; align-items: center; padding-left: 3px; }
  .logo { margin: 0 -1px 0 4px; }
  .menu { padding: 0 7.5px; color: #3d4046; font-size: 11px; }
  .mdi { margin-left: auto; display: flex; align-items: center; gap: 7px; margin-right: 4px; }
  .mdi-min { width: 8px; height: 2px; background: #8d9199; margin-top: 6px; }
  .mdi-max { width: 8px; height: 6px; border: 1px solid #8d9199; border-top-width: 2px; }

  /* toolbars */
  .tbrow { display: flex; flex: none; }
  .tbrow.first { height: 25px; }
  .tbrow.second { height: 26px; margin-top: 1px; }
  .tbar {
    display: flex;
    align-items: center;
    background: linear-gradient(#eceef3, #dcdfe6);
    border-bottom: 1px solid #b3b7c0;
    border-radius: 0 4px 4px 0;
    height: 100%;
    box-sizing: border-box;
    padding-left: 2px;
  }
  .tbar.a { margin-left: 2px; width: 802px; }
  .tbar.b { margin-left: 1px; width: 328px; }
  .tbar.c { margin-left: 1px; width: 99px; }
  .tbar.d { margin-left: 2px; width: 390px; }
  .tbar.e { width: 672px; }
  .grip {
    width: 8px;
    height: 16px;
    flex: none;
    background: radial-gradient(circle at 2.5px 1.5px, #a8acb4 1.2px, transparent 1.6px) 0 0 / 8px 4px;
  }
  .sep { width: 1px; height: 16px; background: #b5b9c1; margin: 0 3px; flex: none; }
  .drop { width: 12px; flex: none; height: 8px; position: relative; }
  .drop::after { content: ""; position: absolute; left: 3px; top: 3px; border: 3px solid transparent; border-top-color: #666; }
  .tool { width: 22px; height: 22px; display: flex; align-items: center; justify-content: center; flex: none; box-sizing: border-box; }
  .tool.on { background: linear-gradient(#fde9bd, #fbbe66); border: 1px solid #cfa872; border-radius: 2px; }
  .ico { display: block; }
  .combo {
    width: 154px;
    height: 20px;
    margin: 0 3px;
    background: #fff;
    display: flex;
    align-items: center;
    justify-content: space-between;
    flex: none;
    box-sizing: border-box;
    padding-left: 3px;
    font-size: 11px;
    white-space: nowrap;
  }
  .combo span { width: 136px; }
  .combo-btn { width: 12px; height: 100%; flex: none; border-left: 1px solid #ddd; position: relative; background: #eee; }
  .combo-btn::after { content: ""; position: absolute; left: 3px; top: 8px; border: 3px solid transparent; border-top-color: #666; }

  /* main area */
  .main { flex: 1; min-height: 0; display: flex; }
  .nav { width: 391px; flex: none; display: flex; flex-direction: column; padding-top: 1px; box-sizing: border-box; }
  .pane-head {
    height: 19px;
    flex: none;
    background: #b9bfc9;
    display: flex;
    align-items: center;
    justify-content: space-between;
    padding: 0 5px 0 4px;
    color: #4a4e55;
    font-size: 11.2px;
  }
  .pane-btns { display: flex; gap: 9px; align-items: center; }
  .nav-frame {
    flex: 1;
    min-height: 0;
    margin-top: 2px;
    border: 1px solid #8b8f97;
    padding: 0 3px 0 3px;
    background: #eef0f3;
    display: flex;
    flex-direction: column;
  }
  .tree-wrap { flex: 1; min-height: 0; display: flex; }
  .tree { width: 367px; flex: none; background: #fbfbf3; overflow: hidden; padding-left: 1.5px; box-sizing: border-box; }
  .row { height: 18px; display: flex; align-items: center; white-space: nowrap; }
  .cell { width: 19px; height: 18px; flex: none; position: relative; }
  .pipe::before { content: ""; position: absolute; left: 9px; top: 0; bottom: 0; border-left: 1px dotted #777; }
  .pipe.last::before { bottom: 9px; }
  .root::before { content: ""; position: absolute; left: 9px; top: 0; bottom: 9px; border-left: 1px dotted #777; }
  .conn::after { content: ""; position: absolute; left: 10px; top: 9px; width: 10px; border-top: 1px dotted #777; }
  .exp { position: absolute; left: 5px; top: 5px; width: 9px; height: 9px; box-sizing: border-box; border: 1px solid #8d8f94; background: linear-gradient(#fff, #e5e7ea); z-index: 1; }
  .exp .h { position: absolute; left: 1px; top: 3px; width: 5px; height: 1px; background: #2a3a7a; }
  .exp .v { position: absolute; left: 3px; top: 1px; width: 1px; height: 5px; background: #2a3a7a; }
  .tico { flex: none; margin-left: 2px; margin-right: 4.5px; overflow: visible; }
  .label { color: #10101c; }
  .bold { font-weight: 700; }
  .vscroll { width: 16px; flex: none; background: #f0f0f0; display: flex; flex-direction: column; align-items: center; justify-content: space-between; padding: 5px 0; box-sizing: border-box; }
  .thumb-track { flex: 1; width: 100%; margin-top: 16px; }
  .vthumb { height: 482px; background: #c8c8c8; width: 100%; }
  .hscroll { height: 16px; flex: none; background: #f0f0f0; display: flex; align-items: center; justify-content: space-between; padding: 0 24px 0 8px; position: relative; }
  .hthumb { position: absolute; left: 17px; width: 243px; height: 100%; background: #c8c8c8; }
  .nav-tabs { height: 24px; flex: none; display: flex; align-items: flex-start; background: #dde0e6; padding: 2px 0 0 4px; box-sizing: border-box; gap: 4px; }
  .nav-tab { display: flex; align-items: center; gap: 3px; padding: 0 3px; height: 18px; color: #5a5e66; font-size: 11.2px; }
  .nav-tab.active { background: #f3f5f8; border-radius: 2px; box-shadow: 0 0 0 1px #cfd3db; }

  .right { flex: 1; min-width: 0; margin-left: 5px; display: flex; flex-direction: column; }
  .view { display: block; background: #fff; border-top: 1px solid #8a8a8a; box-sizing: border-box; flex: none; }
  .ax { font-size: 11px; font-family: "Liberation Sans", sans-serif; text-anchor: middle; }

  .sheet { flex: 1; min-height: 0; display: flex; flex-direction: column; margin-top: 5px; background: #f0f0f0; }
  .sheet-head { height: 20px; border-top: 1px solid #eef; box-sizing: border-box; padding-left: 4px; }
  .sheet-tools { height: 25px; flex: none; display: flex; align-items: center; background: linear-gradient(#e4e9f3, #f4f6fb); padding-left: 9px; border-bottom: 1px solid #7a7a7a; }
  .sheet-tools .tool { width: 21.8px; }
  .sheet-tools .sep { margin: 0 3.7px; }
  .grid-area { height: 118px; flex: none; background: #f0f0f0; border-bottom: 1px solid #8a8a8a; box-sizing: border-box; padding: 2px 0 0 2px; }
  .grid-inner { display: flex; width: 1282px; }
  table { width: 1262px; table-layout: fixed; border-collapse: collapse; font-family: "Liberation Sans", sans-serif; font-size: 11px; background: #f0f0f0; border: 1px solid #7c7c7c; height: 96px; }
  th { font-weight: 400; padding: 0; }
  thead th { height: 15px; line-height: 14px; border: 1px solid #bdbdbd; border-top: 0; border-bottom: 0; }
  .letters th { height: 13px; line-height: 13px; }
  .lt { background: #e2e2e2; border: 1px solid #9a9a9a !important; font-size: 12px; }
  th.sel { background: #3f9bf5 !important; color: #fff; }
  .lt.sel { color: #14314f; }
  .nr { vertical-align: top; padding-top: 15px; background: #f0f0f0; line-height: 14px; border-bottom: 1px solid #9a9a9a !important; }
  .h1 th, .h2 th { background: #f0f0f0; }
  .h2 th { vertical-align: bottom; border-bottom: 1px solid #9a9a9a; }
  .h1 th[rowspan] { line-height: 16px; border-bottom: 1px solid #9a9a9a; }
  .noB { border-bottom: 0; }
  tbody tr { background: #fff; }
  tbody td, tbody th { border: 1px solid #a8a8a8; padding: 0 4px; line-height: 14px; height: 15px; box-sizing: border-box; }
  tr.cur td { background: #ffffc0; }
  .rh { background: #e6e6e6; padding: 0 !important; font-size: 12px; }
  .ctr { text-align: center; }
  .focus { outline: 1px dotted #111; outline-offset: -1px; }
  .num { text-align: right; }
  .sys { padding-left: 3px; }
  .grid-scroll { width: 16px; margin-left: 2px; height: 98px; flex: none; display: flex; flex-direction: column; align-items: center; justify-content: space-between; padding: 5px 0; box-sizing: border-box; background: #f4f4f4; position: relative; }
  .gthumb { position: absolute; top: 17px; left: 0; width: 100%; height: 17px; background: #c8c8c8; }

  .tabs { height: 18px; flex: none; display: flex; padding-left: 2px; background: #f0f0f0; border-bottom: 1px solid #d8d8d8; font-family: "Liberation Sans", sans-serif; font-size: 11px; align-items: flex-start; }
  .tab { padding: 1px 3px 0 3.7px; height: 15px; border: 1px solid #9a9a9a; border-top: 0; border-left-width: 0; border-radius: 0 0 4px 4px; line-height: 15px; white-space: nowrap; }
  .tab.active { background: #fff; border-left-width: 1px; }

  /* status bar */
  .status {
    height: 20px;
    flex: none;
    display: flex;
    align-items: center;
    background: linear-gradient(#d6d9df, #b4b8c0 35%, #a9adb5 70%, #bcc0c7);
    font-family: "Liberation Sans", sans-serif;
    font-size: 11px;
    color: #1d1d1f;
    white-space: nowrap;
  }
  .st-left { padding-left: 4px; width: 952px; flex: none; box-sizing: border-box; font-size: 11.5px; }
  .toggles { display: flex; height: 19px; align-self: flex-end; gap: 2px; }
  .tog { height: 100%; line-height: 18px; box-sizing: border-box; border: 1px solid #e8e8e8; background: #c5c8cf; text-align: center; font-size: 11px; }
  .tog.down { border-color: #222 #eee #eee #222; }
  .tog:nth-child(1) { width: 37px; }
  .tog:nth-child(2) { width: 46px; }
  .tog:nth-child(3) { width: 50px; }
  .tog:nth-child(4) { width: 46px; }
  .tog:nth-child(5) { width: 49px; }
  .tog:nth-child(6) { width: 28px; }
  .st { flex: none; border-left: 1px solid #a0a4ac; padding-left: 2px; height: 100%; line-height: 20px; box-sizing: border-box; }
  .ks { margin-left: 65px; width: 89px; border-left: 0; }
  .eb { width: 88px; }
  .cx { width: 74px; }
  .cy { width: 74px; }
  .cz { width: 70px; }
</style>
